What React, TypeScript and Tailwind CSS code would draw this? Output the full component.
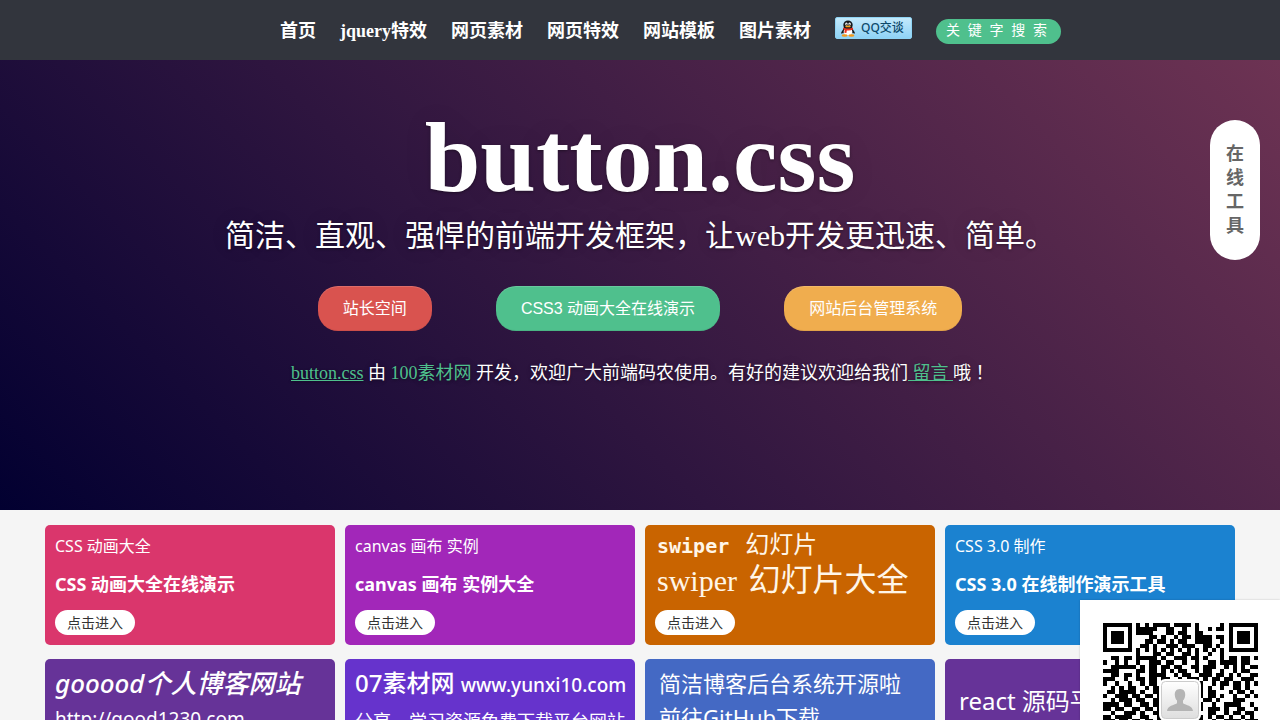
const SERIF = 'font-["Liberation_Serif","Noto_Sans_CJK_SC",serif]';
const SANS = 'font-["Liberation_Sans","Noto_Sans_CJK_SC",sans-serif]';
const HUMANIST = 'font-["Noto_Sans","Noto_Sans_CJK_SC",sans-serif]';

const navItems = ['首页', 'jquery特效', '网页素材', '网页特效', '网站模板', '图片素材'];

const heroButtons = [
  { label: '站长空间', color: 'bg-[#d9534f]' },
  { label: 'CSS3 动画大全在线演示', color: 'bg-[#4fc08d]' },
  { label: '网站后台管理系统', color: 'bg-[#f0ad4e]' },
];

const qrRows = [
  '#######.#.#.####.####.#.....#.#######',
  '#.....#.#####..##..#..#..#.##.#.....#',
  '#.###.#.####...##.##..##......#.###.#',
  '#.###.#....##.#..#.##.####.##.#.###.#',
  '#.###.#...##.##.#.##..####..#.#.###.#',
  '#.....#..##.#..###.###..##.#..#.....#',
  '#######.#.#.#.#.#.#.#.#.#.#.#.#######',
  '........#...##.##..##.#..#..#........',
  '..##.##.#####.#..###.##.#...#.##.##.#',
  '#..#.#..#..###.##..#..#..##.####.##..',
  '..######.#.##.##.##..##.###..#.#.#.##',
  '####....##.##.#.#.##..#.##..#..#.##..',
  '..##.##.#..####..#.##..###.##.#.#..##',
  '###..#..##.##.##..#.###.#.##.##..###.',
  '#..#..#..#.##.###......#..#.##.##.#.#',
  '..#.#.##..#.##........##.#..#..##.#..',
  '.##.####.#..##........##.##...#.##.#.',
  '#..###.##.##.#.........#.##.#..#..#.#',
  '..#.###.##..##........#.##.#...###...',
  '####.##..##.##........##..#..####..#.',
  '##.##..##.##.#........##.###.#..##..#',
  '..#..###.#..##........#..##..#.##.##.',
  '##.####..##..#........##.#.##.#..#.#.',
  '###.##.##.##.##......###..#..####.###',
];

const qrPath = qrRows
  .flatMap((row, y) => [...row].map((cell, x) => (cell === '#' ? `M${x} ${y}h1v1h-1z` : '')))
  .join('');

function Penguin() {
  return (
    <svg viewBox="0 0 16 17" className="h-[17px] w-4 shrink-0" aria-hidden="true">
      <ellipse cx="8" cy="10.5" rx="5.2" ry="5" fill="#15181c" />
      <path d="M3.4 9.2L1.2 12.2L1.6 14L4 12zM12.6 9.2L14.8 12.2L14.4 14L12 12z" fill="#15181c" />
      <ellipse cx="8" cy="11.8" rx="4.3" ry="3.9" fill="#fff" />
      <ellipse cx="8" cy="4.9" rx="4.7" ry="4.5" fill="#15181c" />
      <ellipse cx="6.4" cy="4" rx="1.2" ry="1.5" fill="#fff" />
      <ellipse cx="9.6" cy="4" rx="1.2" ry="1.5" fill="#fff" />
      <circle cx="6.7" cy="4.2" r=".5" fill="#000" />
      <circle cx="9.3" cy="4.2" r=".5" fill="#000" />
      <ellipse cx="8" cy="6.4" rx="2.8" ry=".9" fill="#f6a21b" />
      <path d="M3.2 7.4Q8 9.8 12.8 7.4L13.2 9.5Q10 10.8 6.8 10.4L6.4 13L4.4 12.8L4.7 10Q3.7 9.6 3 9z" fill="#e8301f" />
      <ellipse cx="4.6" cy="15.5" rx="3" ry="1.2" fill="#f59a1b" />
      <ellipse cx="11.4" cy="15.5" rx="3" ry="1.2" fill="#f59a1b" />
    </svg>
  );
}

function EnterButton() {
  return (
    <button type="button" className="mt-[10px] block h-[25px] w-20 rounded-full bg-white text-center text-[14px] leading-[25px] text-[#333]">
      点击进入
    </button>
  );
}

function TopicCard({ color, kicker, title }: { color: string; kicker: string; title: string }) {
  return (
    <article className={`h-[120px] rounded-[5px] px-[10px] pt-[9px] whitespace-nowrap text-white ${color}`}>
      <p className="text-[16px] leading-6">{kicker}</p>
      <h3 className="mt-[10px] text-[18px] leading-8 font-bold">{title}</h3>
      <EnterButton />
    </article>
  );
}

export default function App() {
  return (
    <div className={`min-h-screen bg-[#f5f5f5] ${SERIF}`}>
      <header className="flex h-[60px] items-center justify-center bg-[#32353d] pl-[61px]">
        <nav className="flex items-center gap-6 pt-[2px] text-[18px] font-bold whitespace-nowrap text-white">
          {navItems.map((item) => (
            <a key={item} href="#">{item}</a>
          ))}
          <a
            href="#"
            className={`mb-[6px] flex h-[22px] w-[77px] items-center gap-[5px] rounded-[2px] border border-[#8fd4f5] bg-linear-to-b from-[#c3e9fb] to-[#8fd3f6] pl-1 text-[12px] font-medium text-[#0d4a6b] ${HUMANIST}`}
          >
            <Penguin />
            QQ交谈
          </a>
          <input
            type="text"
            aria-label="关键字搜索"
            placeholder="关  键  字  搜  索"
            className={`h-[25px] w-[125px] rounded-full bg-[#4fc08d] px-[10px] pb-[2px] text-[14px] font-normal text-white outline-none placeholder:text-white ${SANS}`}
          />
        </nav>
      </header>

      <section className="h-[450px] bg-[linear-gradient(45deg,#020031,#6d3353)] pt-12 text-center text-white [text-shadow:0_1px_3px_rgba(0,0,0,0.4),0_0_30px_rgba(0,0,0,0.08)]">
        <h1 className="text-[100px] leading-[100px] font-bold">button.css</h1>
        <h2 className="mt-2 text-[30px] leading-10">简洁、直观、强悍的前端开发框架，让web开发更迅速、简单。</h2>
        <div className="mt-[30px] flex justify-center gap-16">
          {heroButtons.map((button) => (
            <button
              key={button.label}
              type="button"
              className={`h-[45px] rounded-[20px] px-[25px] text-[16px] shadow-[inset_0_1px_0_rgba(255,255,255,0.15),inset_0_-1px_0_rgba(0,0,0,0.06)] [text-shadow:none] ${SANS} ${button.color}`}
            >
              {button.label}
            </button>
          ))}
        </div>
        <p className="mt-7 text-[18px] leading-7">
          <a href="#" className="text-[#4fc08d] underline">button.css</a> 由{' '}
          <a href="#" className="text-[#4fc08d]">100素材网</a>{' '}
          开发，欢迎广大前端码农使用。有好的建议欢迎给我们
          <a href="#" className="whitespace-pre text-[#4fc08d] underline"> 留言 </a>哦
          <span lang="zh-TW" className='font-["Noto_Sans_CJK_TC",sans-serif] leading-none'>！</span>
        </p>
      </section>

      <main className={`mx-auto grid max-w-[1190px] grid-cols-4 gap-x-[10px] gap-y-[14px] pt-[15px] pb-4 ${HUMANIST}`}>
        <TopicCard color="bg-[#da366c]" kicker="CSS 动画大全" title="CSS 动画大全在线演示" />
        <TopicCard color="bg-[#a227b9]" kicker="canvas 画布 实例" title="canvas 画布 实例大全" />
        <article className="h-[120px] rounded-[5px] bg-[#c96400] px-[10px] pt-1 whitespace-nowrap text-[#fff6e8]">
          <p className='h-8 pl-[2px] font-["DejaVu_Sans_Mono","Noto_Sans_CJK_SC",monospace] text-[20px] leading-8'>
            <span className="font-bold">swiper</span> <span className="pl-1 text-[24px]">幻灯片</span>
          </p>
          <h3 className="h-[39px] pl-[2px] text-[30px] leading-[39px] font-normal font-['Liberation_Serif','Noto_Sans_CJK_SC',serif]">
            swiper <span className="pl-1 text-[32px]">幻灯片大全</span>
          </h3>
          <EnterButton />
        </article>
        <TopicCard color="bg-[#1b82d0]" kicker="CSS 3.0 制作" title="CSS 3.0 在线制作演示工具" />
        <article className="h-[120px] rounded-[5px] bg-[#663398] px-[10px] pt-1 whitespace-nowrap text-white">
          <h3 className="text-[26px] leading-10 font-medium italic">gooood个人博客网站</h3>
          <p className="text-[19px] leading-8">http://good1230.com</p>
        </article>
        <article className="h-[120px] rounded-[5px] bg-[#6633cc] px-[10px] pt-1 whitespace-nowrap text-white">
          <h3 className="text-[24px] leading-10 font-medium">
            07素材网 <span className="text-[19px]">www.yunxi10.com</span>
          </h3>
          <p className="text-[18px] leading-8">分享，学习资源免费下载平台网站</p>
        </article>
        <article className="h-[120px] rounded-[5px] bg-[#4469c4] px-[14px] pt-[7px] text-[22px] leading-[34px] whitespace-nowrap text-white">
          <h3>简洁博客后台系统开源啦</h3>
          <p>前往GitHub下载</p>
        </article>
        <article className="flex h-[120px] items-start rounded-[5px] bg-[#663398] px-[14px] pt-[26px] whitespace-nowrap text-white">
          <h3 className="text-[24px] leading-8">react 源码平台</h3>
        </article>
      </main>

      <aside className="fixed top-[120px] right-5 flex w-[50px] justify-center rounded-full bg-white py-[22px]">
        <a href="#" className="w-[18px] text-[18px] leading-6 font-bold break-all text-[#666]">在线工具</a>
      </aside>

      <aside className="fixed right-0 bottom-0 h-[120px] w-[200px] overflow-hidden bg-white shadow-[0_0_2px_rgba(0,0,0,0.2)]">
        <svg viewBox="0 0 200 120" className="w-full" role="img" aria-label="二维码">
          <defs>
            <linearGradient id="badge" x1="0" y1="0" x2="0" y2="1">
              <stop offset="0" stopColor="#fff" />
              <stop offset="1" stopColor="#dedede" />
            </linearGradient>
          </defs>
          <path transform="translate(22.5 22.5) scale(4.2)" d={qrPath} fill="#000" shapeRendering="crispEdges" />
          <rect x="79" y="79" width="42" height="42" rx="6" fill="#fff" />
          <rect x="81.5" y="81.5" width="37" height="37" rx="4" fill="url(#badge)" stroke="#ccc" />
          <path
            d="M100 89C96 89 94.5 92 94.8 95.2C95 98 96 99.5 97 100.6V103.2C94 105.2 87.5 105.6 87 111H113C112.5 105.6 106 105.2 103 103.2V100.6C104 99.5 105 98 105.2 95.2C105.5 92 104 89 100 89Z"
            fill="#b4b4b4"
          />
        </svg>
      </aside>
    </div>
  );
}
